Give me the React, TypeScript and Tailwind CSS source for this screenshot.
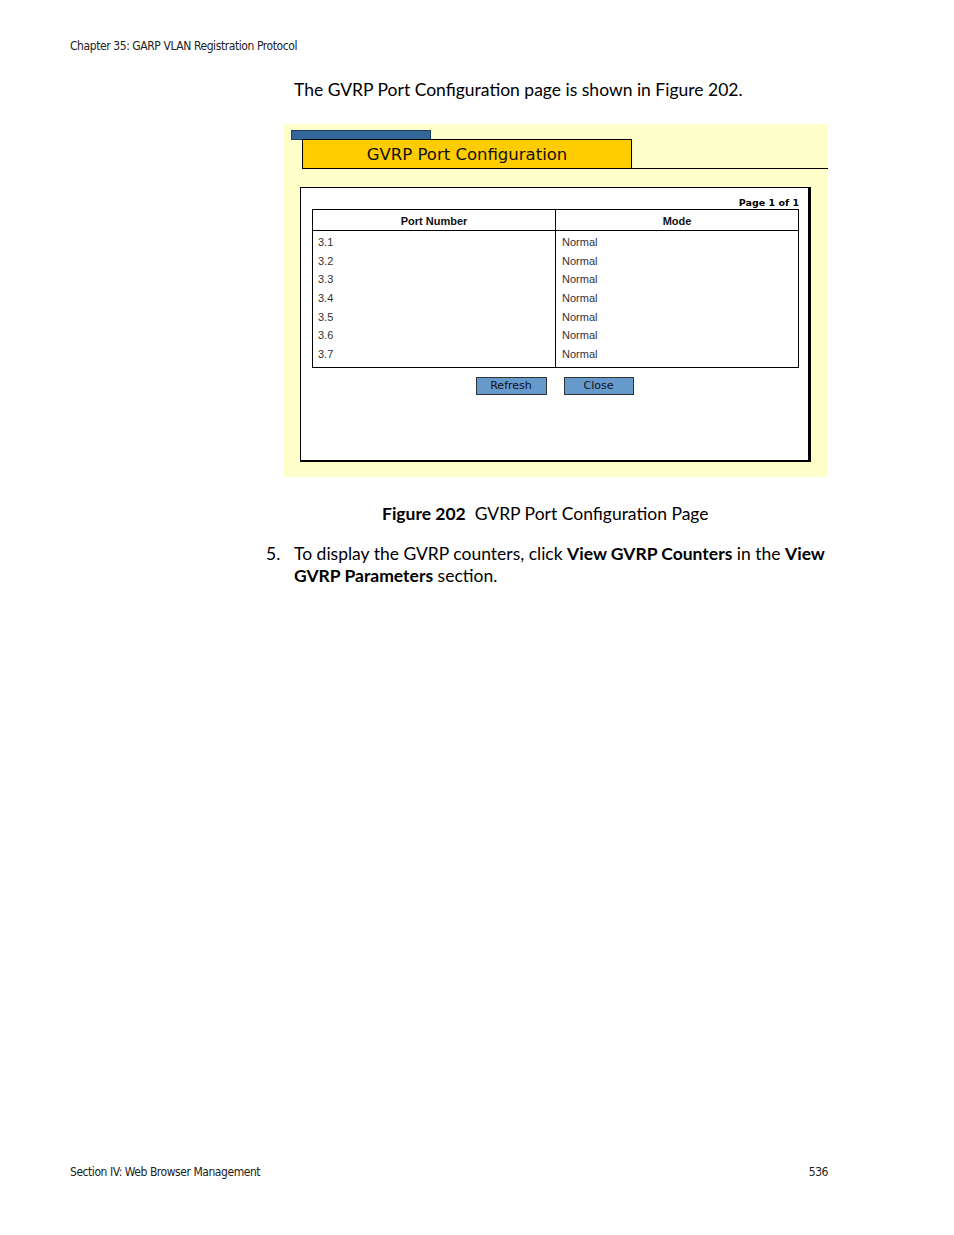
import React from "react";

const ports = ["3.1", "3.2", "3.3", "3.4", "3.5", "3.6", "3.7"];

const body = { fontFamily: "Lato, 'Open Sans', sans-serif" };
const narrow = { fontFamily: "'Liberation Sans Narrow', 'DejaVu Sans Condensed', sans-serif" };
const verdana = { fontFamily: "'DejaVu Sans', Verdana, sans-serif" };
const arial = { fontFamily: "'Liberation Sans', Arial, sans-serif" };

export default function App() {
  return (
    <div className="w-[954px] min-h-[1235px] bg-white flex flex-col text-black">
      <header className="pt-[39px] pl-[70px] text-[12px] tracking-[-0.42px] leading-[14px] text-[#222]" style={narrow}>
        Chapter 35: GARP VLAN Registration Protocol
      </header>

      <p className="mt-[26px] ml-[294px] text-[17.5px] leading-[22px]" style={body}>
        The GVRP Port Configuration page is shown in Figure 202.
      </p>

      {/* screenshot figure */}
      <div className="mt-[23px] ml-[284px] w-[544px] h-[353px] bg-[#FFFFCC] flex flex-col">
        <div className="mt-[6px] ml-[7px] w-[140px] h-[10px] bg-[#336699] border border-[#1d3d5c]" />
        <div className="flex -mt-px">
          <div className="w-[18px]" />
          <div
            className="w-[330px] h-[30px] bg-[#FFCC00] border border-black flex items-center justify-center pt-[3px] text-[16.5px] text-[#111]"
            style={verdana}
          >
            GVRP Port Configuration
          </div>
          <div className="flex-1 border-b border-black" />
        </div>

        <div className="mt-[18px] ml-[16px] w-[511px] h-[275px] bg-white border border-black border-r-[3px] border-b-2 flex flex-col">
          <div className="mt-[9px] pr-[9px] text-right text-[9.5px] leading-[12px] font-bold text-black" style={verdana}>
            Page 1 of 1
          </div>
          <div className="ml-[11px] w-[487px] border border-black" style={arial}>
            <div className="flex h-[21px] border-b border-black text-[11px] font-bold text-[#111]">
              <div className="w-[243px] border-r border-black flex items-end justify-center pb-[1px]">Port Number</div>
              <div className="flex-1 flex items-end justify-center pb-[1px]">Mode</div>
            </div>
            <div className="flex text-[11px] text-[#333]">
              <div className="w-[243px] border-r border-black pt-[2px] pb-[3px]">
                {ports.map((p) => (
                  <div key={p} className="h-[18.67px] flex items-center pl-[5px]">{p}</div>
                ))}
              </div>
              <div className="flex-1 pt-[2px] pb-[3px]">
                {ports.map((p) => (
                  <div key={p} className="h-[18.67px] flex items-center pl-[6px]">Normal</div>
                ))}
              </div>
            </div>
          </div>
          <div className="mt-[9px] flex justify-center gap-[17px] text-[11px] text-[#111]" style={verdana}>
            <button className="w-[71px] h-[18px] bg-[#6699CC] border border-[#333] leading-none">Refresh</button>
            <button className="w-[70px] h-[18px] bg-[#6699CC] border border-[#333] leading-none">Close</button>
          </div>
        </div>
      </div>

      <p className="mt-[26px] ml-[382px] text-[17.5px] leading-[22px]" style={body}>
        <span className="font-bold">Figure 202</span>&nbsp; GVRP Port Configuration Page
      </p>

      <div className="mt-[18px] ml-[266px] flex text-[17.5px] leading-[22px]" style={body}>
        <span className="w-[28px] shrink-0">5.</span>
        <p>
          To display the GVRP counters, click <span className="font-bold">View GVRP Counters</span> in the{" "}
          <span className="font-bold">View</span>
          <br />
          <span className="font-bold">GVRP Parameters</span> section.
        </p>
      </div>

      <footer className="mt-auto pb-[56px] pl-[70px] pr-[126px] flex justify-between text-[12px] tracking-[-0.45px] leading-[14px] text-[#222]" style={narrow}>
        <span>Section IV: Web Browser Management</span>
        <span>536</span>
      </footer>
    </div>
  );
}
